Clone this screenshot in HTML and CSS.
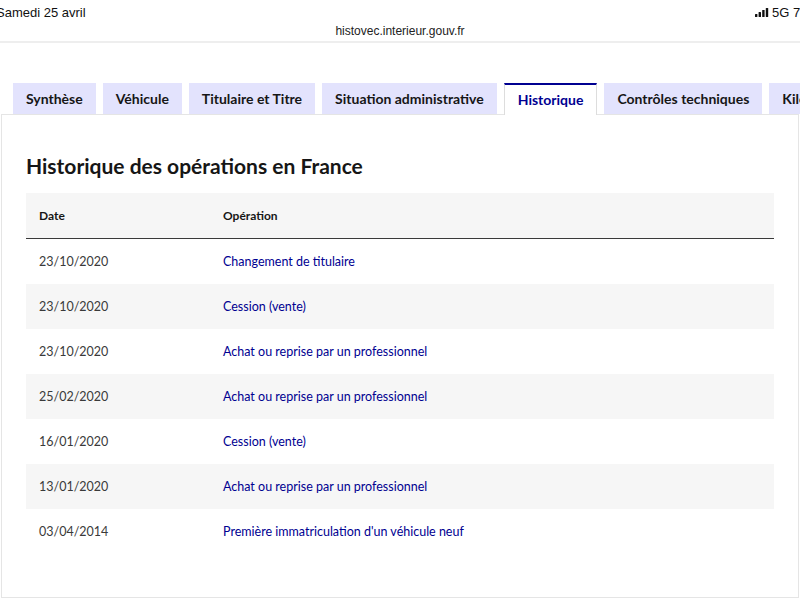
FILE: index.html
```html
<!DOCTYPE html>
<html lang="fr">
<head>
  <meta charset="UTF-8" />
  <meta name="viewport" content="width=device-width, initial-scale=1.0" />
  <title>HistoVec - Historique</title>
  <link rel="stylesheet" href="styles.css">
</head>
<body>
  <div class="statusbar">
    <span class="day">Samedi 25 avril</span>
    <span class="net">
      <svg class="bars" width="14" height="9" viewBox="0 0 14 9">
        <rect x="0" y="6" width="2.4" height="3" rx="0.5"/>
        <rect x="3.6" y="4" width="2.4" height="5" rx="0.5"/>
        <rect x="7.2" y="2" width="2.4" height="7" rx="0.5"/>
        <rect x="10.8" y="0" width="2.4" height="9" rx="0.5"/>
      </svg>
      5G 79 %
    </span>
  </div>
  <div class="urlbar">histovec.interieur.gouv.fr</div>

  <main class="page">
    <nav class="tabs">
      <a class="tab">Synthèse</a>
      <a class="tab">Véhicule</a>
      <a class="tab">Titulaire et Titre</a>
      <a class="tab">Situation administrative</a>
      <a class="tab active">Historique</a>
      <a class="tab">Contrôles techniques</a>
      <a class="tab">Kilométrage</a>
    </nav>

    <section class="panel">
      <h2>Historique des opérations en France</h2>
      <table class="history">
        <thead>
          <tr><th class="col-date">Date</th><th>Opération</th></tr>
        </thead>
        <tbody>
          <tr><td>23/10/2020</td><td class="op">Changement de titulaire</td></tr>
          <tr><td>23/10/2020</td><td class="op">Cession (vente)</td></tr>
          <tr><td>23/10/2020</td><td class="op">Achat ou reprise par un professionnel</td></tr>
          <tr><td>25/02/2020</td><td class="op">Achat ou reprise par un professionnel</td></tr>
          <tr><td>16/01/2020</td><td class="op">Cession (vente)</td></tr>
          <tr><td>13/01/2020</td><td class="op">Achat ou reprise par un professionnel</td></tr>
          <tr><td>03/04/2014</td><td class="op">Première immatriculation d'un véhicule neuf</td></tr>
        </tbody>
      </table>
    </section>
  </main>
</body>
</html>
```

FILE: styles.css
```css
html, body {
  margin: 0;
  padding: 0;
  width: 800px;
  height: 600px;
  overflow: hidden;
  background: #fff;
}
body {
  font-family: Lato, 'Noto Sans', sans-serif;
  color: #1e1e1e;
}
.statusbar {
  display: flex;
  justify-content: space-between;
  align-items: center;
  height: 24px;
  font-family: 'Liberation Sans', Arial, sans-serif;
  font-size: 13px;
  color: #111;
}
.day {
  margin-left: -4px;
}
.net {
  display: flex;
  align-items: center;
  gap: 3px;
  margin-right: -40px;
  width: 85px;
  white-space: nowrap;
}
.bars {
  fill: #111;
}
.urlbar {
  text-align: center;
  font-family: 'Liberation Sans', Arial, sans-serif;
  font-size: 12px;
  color: #222;
  height: 17px;
  line-height: 14px;
  border-bottom: 2px solid #eeeeee;
}
.page {
  padding: 40px 0 0 1px;
}
.tabs {
  display: flex;
  gap: 7px;
  padding-left: 12px;
  white-space: nowrap;
  height: 31px;
  align-items: flex-end;
}
.tab {
  flex: none;
  height: 31px;
  line-height: 31px;
  padding: 0 13px;
  background: #e3e3fd;
  font-weight: bold;
  font-size: 14px;
  color: #161616;
}
.tab.active {
  background: #fff;
  color: #000091;
  height: 30px;
  border-top: 2px solid #000091;
  border-left: 1px solid #ddd;
  border-right: 1px solid #ddd;
  line-height: 30px;
  margin-bottom: -1px;
  position: relative;
}
.panel {
  width: 748px;
  height: 482px;
  padding: 0 24px;
  border: 1px solid #e5e5e5;
}
.panel h2 {
  margin: 37px 0 13px;
  font-size: 21px;
  font-weight: bold;
  line-height: 28px;
  color: #161616;
}
.history {
  width: 100%;
  border-collapse: collapse;
  font-size: 12.5px;
}
.history th {
  text-align: left;
  font-weight: bold;
  font-size: 12px;
  height: 45px;
  padding: 0 13px;
  background: #f6f6f6;
  border-bottom: 1px solid #3a3a3a;
  color: #161616;
}
.history .col-date {
  width: 158px;
}
.history td {
  height: 45px;
  padding: 0 13px;
  color: #3a3a3a;
}
.history tbody tr:nth-child(even) td {
  background: #f6f6f6;
}
.history td.op {
  color: #000091;
}
```
